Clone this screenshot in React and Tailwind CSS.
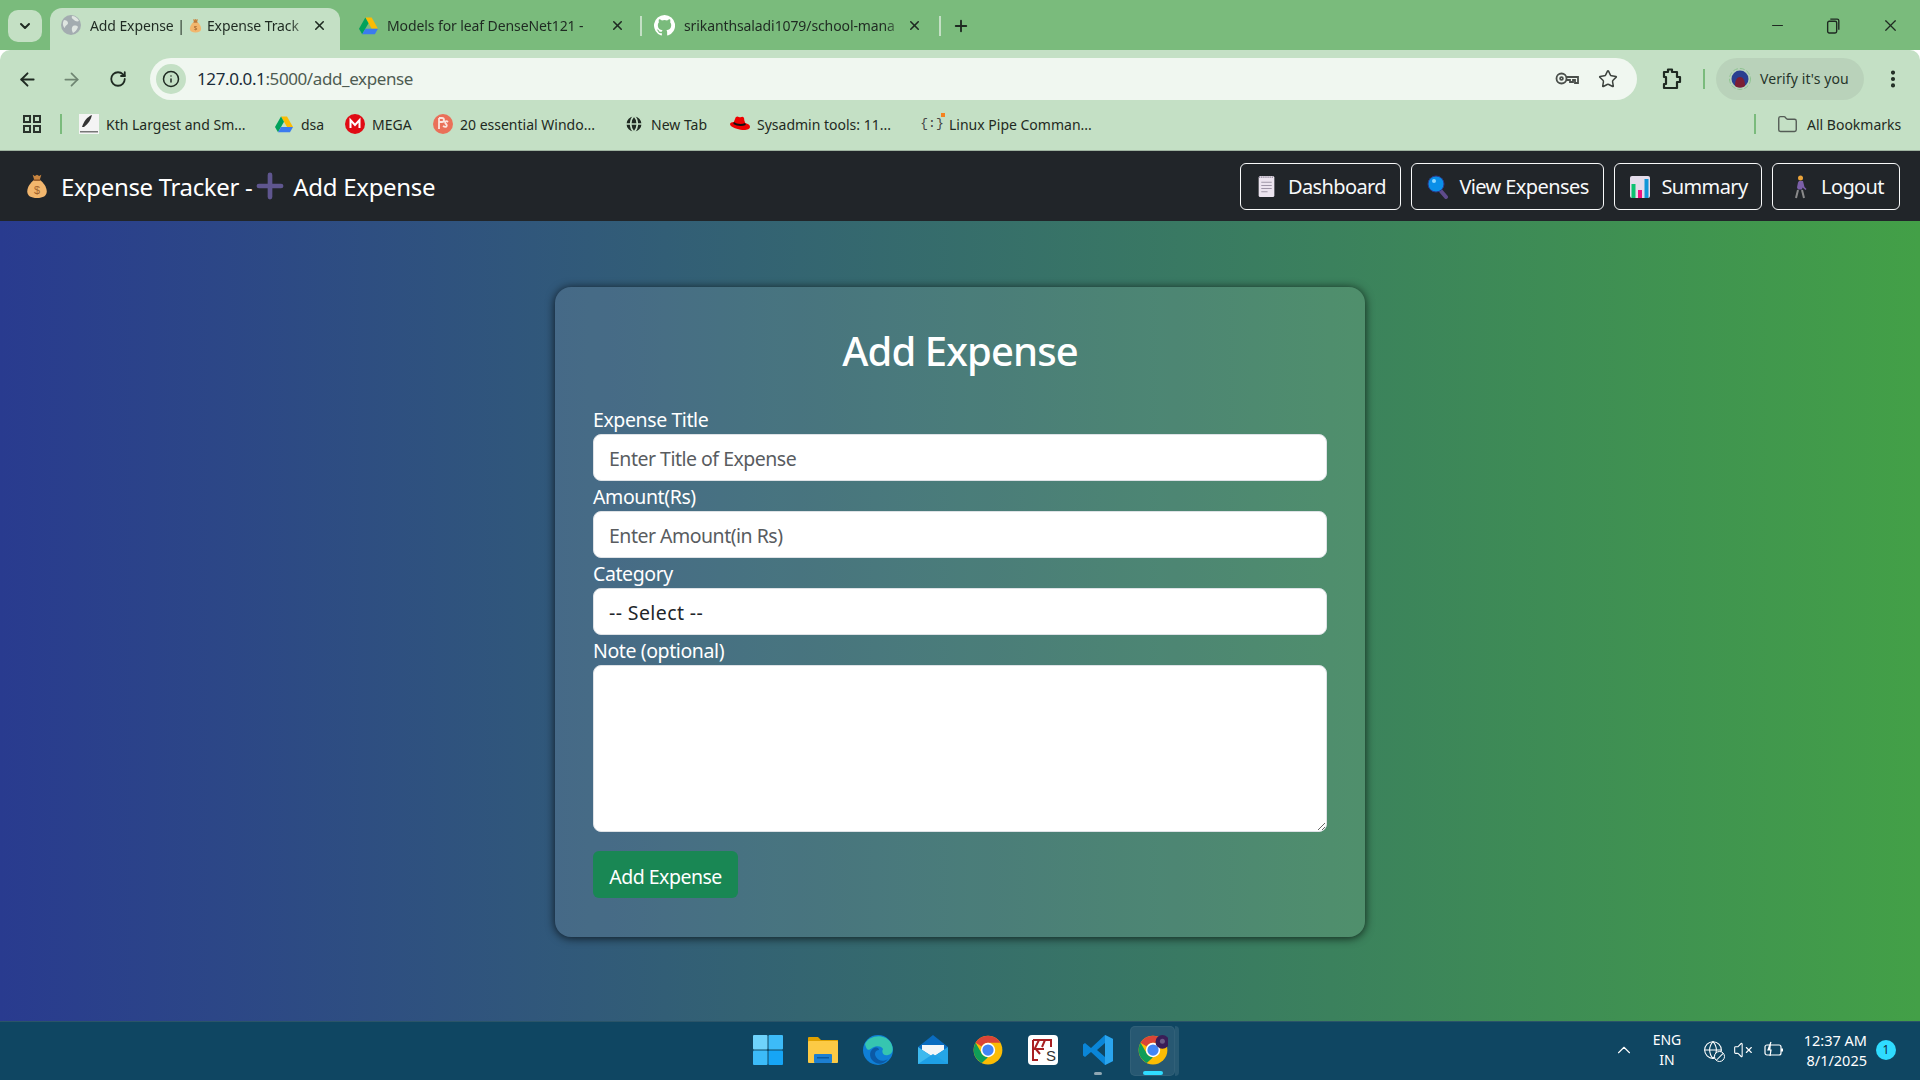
import { ArrowLeft, ArrowRight, RotateCw, Info, Star, EllipsisVertical, X, Plus, Minus, ChevronDown, ChevronUp, Folder, Globe, VolumeX } from 'lucide-react';

const UI = "font-['Noto_Sans','Open_Sans',sans-serif]";

function DriveIcon({ size = 18 }) {
  return (
    <svg width={size} height={size} viewBox="0 0 24 22">
      <path d="M8 1h8l8 14h-8z" fill="#fbbc04" />
      <path d="M8 1 0 15l4 7 8-14z" fill="#00a25b" />
      <path d="M8 15h16l-4 7H4z" fill="#3b7bef" />
    </svg>
  );
}

function ChromeIcon({ size = 30, badge = false }) {
  return (
    <svg width={size} height={size} viewBox="0 0 48 48">
      <circle cx="24" cy="24" r="23" fill="#fbbc04" />
      <path d="M24 1a23 23 0 0 1 19.900 11.500H24a11.500 11.500 0 0 0-10 5.750L4.100 12.500A23 23 0 0 1 24 1z" fill="#db4437" />
      <path d="M4.100 12.500 14 29.750A11.500 11.500 0 0 0 24 35.500L14.100 44.700A23 23 0 0 1 4.100 12.500z" fill="#0f9d58" />
      <circle cx="24" cy="24" r="11.500" fill="#fff" />
      <circle cx="24" cy="24" r="9" fill="#4285f4" />
      {badge && <circle cx="39" cy="11" r="11" fill="#3a1d57" />}
      {badge && <circle cx="39" cy="10" r="4" fill="#6b5a85" />}
    </svg>
  );
}

function MoneyBag({ size = 26 }) {
  return (
    <svg width={size} height={size} viewBox="0 0 24 24">
      <path d="M8 1.500l2 1.200 2-1.200 2 1.200 2-1.200-1.500 5h-5z" fill="#c9853f" />
      <path d="M9.300 6.500h5.400C18 9 21 13 21 17c0 4-3.500 6-9 6s-9-2-9-6c0-4 3-8 6.300-10.500z" fill="#f2b66d" />
      <rect x="8.800" y="5.800" width="6.400" height="1.500" rx=".7" fill="#9c5f2a" />
      <text x="12" y="19.500" textAnchor="middle" fontSize="10" fontFamily="Liberation Sans" fill="#a1622c">$</text>
    </svg>
  );
}

function GitHubIcon() {
  return (
    <svg width={21} height={21} viewBox="0 0 16 16" fill="#fff">
      <path d="M8 0a8 8 0 0 0-2.530 15.590c.4.07.55-.17.55-.38v-1.340c-2.230.480-2.690-1.070-2.690-1.070-.370-.930-.890-1.180-.890-1.180-.730-.500.050-.490.050-.490.800.060 1.230.820 1.230.820.710 1.220 1.870.870 2.330.660.070-.520.280-.870.510-1.070-1.780-.200-3.640-.890-3.640-3.950 0-.870.310-1.590.820-2.150-.080-.200-.360-1.020.080-2.120 0 0 .670-.210 2.200.820a7.600 7.600 0 0 1 4 0c1.530-1.040 2.200-.820 2.200-.820.440 1.100.160 1.920.080 2.120.510.560.820 1.270.820 2.150 0 3.070-1.870 3.750-3.650 3.950.290.250.540.730.540 1.480v2.200c0 .210.150.460.550.380A8 8 0 0 0 8 0z" />
    </svg>
  );
}

function Tab({ icon, title, gap }) {
  return (
    <div className="flex items-center h-[34px]">
      {icon}
      <span className={`${gap} flex-1 whitespace-nowrap text-[14px] text-[#1f2a22] [mask-image:linear-gradient(to_right,#000_90%,transparent)] tracking-[-0.1px]`}>{title}</span>
      <X size={15} strokeWidth={2.500} className="text-[#1f2a22] shrink-0" />
    </div>
  );
}

function Bookmark({ icon, label, w }) {
  return (
    <div className={`flex items-center shrink-0 gap-[7px] ${w}`}>
      <span className="w-[20px] flex justify-center shrink-0">{icon}</span>
      <span className="text-[14px] text-[#1f2a22] whitespace-nowrap">{label}</span>
    </div>
  );
}

function NavButton({ icon, label, w }) {
  return (
    <a className={`flex items-center justify-center gap-[9px] h-[47px] mt-[1px] border border-[#f8f9fa] rounded-[6px] text-[20px] text-[#f8f9fa] tracking-[-0.6px] shrink-0 ${w}`}>
      <span className="w-[24px] flex justify-center">{icon}</span>
      <span className="pt-[1px]">{label}</span>
    </a>
  );
}

function Field({ label, children }) {
  return (
    <div>
      <label className="block h-[30px] leading-[32px] text-[19.500px] text-white tracking-[-0.4px]">{label}</label>
      {children}
    </div>
  );
}

const inputClass = 'block w-full h-[47px] px-[15px] pt-[2px] bg-white border border-[#dee2e6] rounded-[8px] text-[19.500px] tracking-[-0.5px] text-[#212529] placeholder:text-[#595c5f] outline-none';

export default function App() {
  return (
    <div className={`w-[1920px] h-[1080px] overflow-hidden flex flex-col ${UI}`}>
      {/* tab strip */}
      <div className="h-[50px] bg-[#7abb7c] flex items-end shrink-0">
        <div className="w-[34px] h-[32px] ml-[8px] mb-[8px] rounded-[10px] bg-[#c4e0c4] flex items-center justify-center">
          <ChevronDown size={16} strokeWidth={3} className="text-[#1f2a22]" />
        </div>
        <div className="ml-[8px] w-[290px] h-[42px] pl-[11px] pr-[13px] bg-[#c4e0c5] rounded-t-[12px]">
          <Tab gap="ml-[9px]" title={<>Add Expense | <span className="inline-block align-[-2px]"><MoneyBag size={15} /></span> Expense Track</>} icon={<svg width="20" height="20" viewBox="0 0 20 20" className="shrink-0"><circle cx="10" cy="10" r="10" fill="#a3acb0" /><path d="M3 5c2 0 4 1 4 3s-3 2-3 5c-2-1-3-5-1-8zM11 1c3 0 6 2 7 5-2 1-4 0-5-1s-3-2-2-4zM12 11c2-1 5 0 5 1-1 3-3 5-5 6-1-2-2-5 0-7z" fill="#dfe6e1" /></svg>} />
        </div>
        <div className="h-[42px] w-[269px] ml-[16px] pl-[3px]">
          <Tab gap="ml-[9px]" title="Models for leaf DenseNet121 -" icon={<DriveIcon size={19} />} />
        </div>
        <div className="w-[2px] h-[20px] mb-[14px] ml-[15px] bg-[#c4e0c5]" />
        <div className="h-[42px] w-[285px] ml-[12px] pr-[17px]">
          <Tab gap="ml-[9px]" title="srikanthsaladi1079/school-mana" icon={<GitHubIcon />} />
        </div>
        <div className="w-[2px] h-[20px] mb-[14px] bg-[#c4e0c5]" />
        <Plus size={18} strokeWidth={2.500} className="mb-[15px] ml-[11px] text-[#1f2a22]" />
        <div className="flex-1" />
        <div className="flex items-center h-[50px] text-[#1f2a22] mr-[20px] gap-[39px]">
          <Minus size={17} strokeWidth={1.500} />
          <svg width="17" height="17" viewBox="0 0 16 16" fill="none" stroke="currentColor" strokeWidth="1.300"><rect x="2.500" y="4" width="8.500" height="11" rx="1.500" /><path d="M5 2h6.500A1.500 1.500 0 0 1 13 3.500V12" /></svg>
          <X size={19} strokeWidth={1.500} />
        </div>
      </div>

      {/* address bar */}
      <div className="h-[58px] bg-[#c4e0c5] rounded-t-[10px] flex items-center shrink-0">
        <ArrowLeft size={21} strokeWidth={2.200} className="ml-[17px] text-[#1f2a22]" />
        <ArrowRight size={21} strokeWidth={2} className="ml-[23px] text-[#6f8572]" />
        <RotateCw size={18} strokeWidth={2.400} className="ml-[27px] text-[#1f2a22]" />
        <div className="ml-[23px] w-[1487px] h-[42px] bg-[#f0f7f0] rounded-full flex items-center">
          <div className="ml-[6px] w-[30px] h-[30px] rounded-full bg-[#c4e0c5] flex items-center justify-center">
            <Info size={18} strokeWidth={2} className="text-[#1f2a22]" />
          </div>
          <span className="ml-[11px] text-[17px] tracking-[-0.4px] text-[#1a2c3a]">127.0.0.1<span className="text-[#4e5c52]">:5000/add_expense</span></span>
          <div className="flex-1" />
          <svg width="24" height="16" viewBox="0 0 24 16" fill="none" stroke="#4a4f4b" strokeWidth="1.800"><circle cx="6.500" cy="7.500" r="5" /><circle cx="6.500" cy="7.500" r="1.400" /><path d="M11.500 6H23v6h-3V9h-2v2h-3V9h-3.500" /></svg>
          <Star size={20} strokeWidth={1.800} className="ml-[19px] mr-[19px] text-[#3d433e]" />
        </div>
        <svg width="24" height="24" viewBox="0 0 24 24" fill="none" stroke="#1f2a22" strokeWidth="2.200" className="ml-[22px]"><path d="M5 5h4V2.500h4V5h5v5h3v5h-3v6H5v-4h2v-7H5z" strokeLinejoin="round" /></svg>
        <div className="ml-[20px] w-[2px] h-[20px] bg-[#7abb7c]" />
        <div className="ml-[11px] w-[148px] h-[42px] rounded-full bg-[#b9d2ba] flex items-center pl-[13px]">
          <svg width="22" height="26" viewBox="0 0 22 26"><circle cx="11" cy="13" r="10.500" fill="none" stroke="#8fc391" strokeWidth="1" strokeDasharray="5 2" /><circle cx="11" cy="13" r="8.500" fill="#2a3f90" /><path d="M6 20c0-6 2-9 5-9s5 3 5 9c-3 2-7 2-10 0z" fill="#7c1f33" /></svg>
          <span className="ml-[9px] -mt-[2px] text-[14px] tracking-[0.1px] text-[#26352a] whitespace-nowrap">Verify it's you</span>
        </div>
        <EllipsisVertical size={22} strokeWidth={2.500} className="ml-[18px] text-[#1f2a22]" />
      </div>

      {/* bookmarks bar */}
      <div className="h-[43px] bg-[#c4e0c5] flex items-center shrink-0 border-b border-[#9eb29f] pb-[10px]">
        <svg width="20" height="20" viewBox="0 0 20 20" fill="none" stroke="#2a332c" strokeWidth="2" className="ml-[22px]"><rect x="2" y="2" width="6" height="6" /><rect x="12" y="2" width="6" height="6" /><rect x="2" y="12" width="6" height="6" /><rect x="12" y="12" width="6" height="6" /></svg>
        <div className="ml-[18px] mr-[17px] w-[2px] h-[20px] bg-[#7abb7c]" />
        <Bookmark w="w-[195px]" label="Kth Largest and Sm..." icon={<svg width="20" height="20" viewBox="0 0 20 20"><rect width="20" height="20" fill="#f4f4f4" /><path d="M3 13C5 7 8 3 13 1c-1 5-4 9-8 12z" fill="#333" /><rect x="1" y="17" width="18" height="1.500" fill="#777" /></svg>} />
        <Bookmark w="w-[71px]" label="dsa" icon={<DriveIcon size={18} />} />
        <Bookmark w="w-[88px]" label="MEGA" icon={<svg width="20" height="20" viewBox="0 0 20 20"><circle cx="10" cy="10" r="10" fill="#e00b14" /><path d="M5.500 14V6l4.500 5 4.500-5v8" stroke="#fff" strokeWidth="2" fill="none" /></svg>} />
        <Bookmark w="w-[191px]" label="20 essential Windo..." icon={<svg width="20" height="20" viewBox="0 0 20 20"><circle cx="10" cy="10" r="10" fill="#ea7059" /><path d="M6 15V4M6 4h3a2 2 0 0 1 0 4H6M15 8c-2-2-4 0-2 2s0 4-3 2" stroke="#fbe4de" strokeWidth="1.800" fill="none" /></svg>} />
        <Bookmark w="w-[106px]" label="New Tab" icon={<Globe size={20} fill="#1f2a22" className="text-[#c4e0c5]" />} />
        <Bookmark w="w-[192px]" label="Sysadmin tools: 11..." icon={<svg width="21" height="18" viewBox="0 0 21 18"><path d="M6 2c2-2 3 0 5 0 2-1 4-1 4 3l1 3c3 1 5 2 5 4 0 3-5 4-10 3C6 14 0 12 0 9c0-1 2-2 4-2z" fill="#e00" /><path d="M4 7c3 2 8 3 12 1l.6 2C12 12 7 11 3.500 9z" fill="#111" /></svg>} />
        <Bookmark w="w-[832px]" label="Linux Pipe Comman..." icon={<span className="text-[13px] font-['Liberation_Mono',monospace] text-[#444] whitespace-nowrap relative">{'{:}'}<span className="absolute -top-[1px] -right-[1px] w-[4px] h-[4px] bg-[#f58220]" /></span>} />
        <div className="w-[2px] h-[20px] bg-[#7abb7c]" />
        <Folder size={21} strokeWidth={1.600} className="ml-[21px] text-[#545c56]" />
        <span className="ml-[9px] text-[14px] text-[#1f2a22] whitespace-nowrap">All Bookmarks</span>
      </div>

      {/* app navbar */}
      <nav className="h-[70px] bg-[#212529] flex items-center pl-[24px] pr-[20px] shrink-0">
        <MoneyBag size={26} />
        <span className="ml-[11px] pt-[2px] text-[24px] text-white tracking-[-0.35px] whitespace-nowrap">Expense Tracker -</span>
        <svg width="28" height="28" viewBox="0 0 24 24" className="ml-[4px]" fill="#5f568f"><path d="M10 2.500a2 2 0 0 1 4 0V10h7.500a2 2 0 0 1 0 4H14v7.500a2 2 0 0 1-4 0V14H2.500a2 2 0 0 1 0-4H10z" /></svg>
        <span className="ml-[9px] pt-[2px] text-[24px] text-white tracking-[-0.3px] whitespace-nowrap">Add Expense</span>
        <div className="flex-1" />
        <div className="flex gap-[10px]">
          <NavButton w="w-[161px]" label="Dashboard" icon={<svg width="17" height="23" viewBox="0 0 16 22"><rect x="0.500" y="1" width="15" height="20" rx="1.500" fill="#ece4ef" /><path d="M3 7h10M3 10h10M3 13h10M3 16h6" stroke="#9f96a8" strokeWidth="1" /><path d="M1 2h14" stroke="#8d8496" strokeWidth="1.500" strokeDasharray="1 1" /></svg>} />
          <NavButton w="w-[193px]" label="View Expenses" icon={<svg width="22" height="24" viewBox="0 0 22 24"><path d="M13 15l6 7" stroke="#5f4b8b" strokeWidth="4" strokeLinecap="round" /><circle cx="9" cy="9" r="8" fill="#0a8fe8" stroke="#2b3a8c" strokeWidth="1" /><circle cx="7" cy="6" r="2" fill="#8fd8ff" /></svg>} />
          <NavButton w="w-[148px]" label="Summary" icon={<svg width="20" height="22" viewBox="0 0 20 22"><rect width="20" height="22" rx="2" fill="#e4dcea" /><rect x="1.500" y="8" width="4" height="14" fill="#0dc271" /><rect x="8" y="14" width="4" height="8" fill="#f0127e" /><rect x="14.500" y="3" width="4" height="19" fill="#1196d8" /></svg>} />
          <NavButton w="w-[128px]" label="Logout" icon={<svg width="16" height="24" viewBox="0 0 16 24"><circle cx="8.500" cy="3" r="2.500" fill="#eaa33a" /><path d="M7 6h4l1.500 6 2 2-1 1-3-2.500-.5 2H6l-1-2 1-5z" fill="#7b5fa8" /><path d="M6 15l-2 8M10 15l2 8" stroke="#8a8a8a" strokeWidth="2" /></svg>} />
        </div>
      </nav>

      {/* page */}
      <main className="h-[800px] shrink-0 bg-[linear-gradient(to_right,#293b8f,#43a047)] flex justify-center pt-[66px]">
        <div className="w-[810px] h-[650px] px-[38px] pt-[37px] rounded-[16px] bg-white/10 shadow-[0_1px_10px_rgba(0,0,0,0.75)]">
          <h2 className="h-[53px] text-center text-[40px] leading-[53px] font-medium tracking-[-0.9px] text-white">Add Expense</h2>
          <form className="mt-[27px] flex flex-col">
            <Field label="Expense Title">
              <input className={inputClass} placeholder="Enter Title of Expense" />
            </Field>
            <Field label="Amount(Rs)">
              <input className={inputClass} placeholder="Enter Amount(in Rs)" />
            </Field>
            <Field label="Category">
              <div className={`${inputClass} flex items-center tracking-[0.4px]`}>-- Select --</div>
            </Field>
            <Field label="Note (optional)">
              <textarea className={`${inputClass} h-[167px]`} />
            </Field>
            <button type="button" className="mt-[19px] w-[145px] h-[47px] pt-[4px] rounded-[6px] bg-[#198754] text-[19.500px] tracking-[-0.5px] text-white">Add Expense</button>
          </form>
        </div>
      </main>

      {/* taskbar */}
      <footer className="flex-1 bg-[#0f4662] border-t border-[#2a5468] flex items-center pb-[2px]">
        <div className="flex-1" />
        <div className="flex items-center gap-[25px]">
          <svg width="30" height="30" viewBox="0 0 30 30"><rect x="0" y="0" width="14.500" height="14.500" rx="1" fill="#6fd3fb" /><rect x="15.500" y="0" width="14.500" height="14.500" rx="1" fill="#3dbbf8" /><rect x="0" y="15.500" width="14.500" height="14.500" rx="1" fill="#3cbbf8" /><rect x="15.500" y="15.500" width="14.500" height="14.500" rx="1" fill="#16a5f5" /></svg>
          <svg width="30" height="30" viewBox="0 0 30 30"><path d="M0 3a1 1 0 0 1 1-1h9l3 3h17v2H0z" fill="#e0a100" /><rect x="0" y="6" width="30" height="22" rx="1" fill="#fcca45" /><rect x="6" y="19" width="18" height="9" rx="1" fill="#1d7fd1" /><rect x="9" y="22" width="12" height="1.500" fill="#0b5a9e" /></svg>
          <svg width="30" height="30" viewBox="0 0 30 30"><circle cx="15" cy="15" r="15" fill="#0f7fd6" /><path d="M2 9C6 0 22-2 28 8c3 6 2 11-3 12-4 1-7-2-5-6-1-3-7-4-11-1-3 2-5 4-7-4z" fill="#36c5b0" /><path d="M13 28c-7-3-8-12-2-15 3-1 5 0 5 2-4 0-5 4-3 7 2 4 8 5 12 2-3 4-8 6-12 4z" fill="#0b5aa6" /></svg>
          <svg width="30" height="30" viewBox="0 0 30 30"><path d="M15 0 30 12v17H0V12z" fill="#0a6cc0" /><path d="M4 10h22v5l-11 7-11-7z" fill="#f3f6f8" /><path d="M0 12l15 10v7H0z" fill="#3db9ee" /><path d="M30 12 15 22 30 29z" fill="#25a5e6" /><path d="M0 29 15 19l15 10z" fill="#1ea0e6" /></svg>
          <ChromeIcon />
          <svg width="30" height="30" viewBox="0 0 30 30"><rect width="30" height="30" rx="4" fill="#fff" /><path d="M5 5h18v7M5 5v20h5M11 5l-4 8 5 6M17 5l-3 7M4 14h12" stroke="#a81f22" strokeWidth="2" fill="none" /><text x="23" y="26" textAnchor="middle" fontSize="15" fontFamily="Liberation Sans" fill="#333">S</text></svg>
          <div className="relative">
            <svg width="30" height="30" viewBox="0 0 30 30" className="block"><path d="M22 0l8 4v22l-8 4L8 17l-6 5-2-1.500V9.500L2 8l6 5zM22 8l-8 7 8 7z" fill="#0a86d8" /><path d="M22 0l8 4v22l-8 4z" fill="#2aa5ee" /></svg>
            <div className="absolute left-[11px] top-[37px] w-[8px] h-[3px] rounded-full bg-[#8fa7b3]" />
          </div>
          <div className="relative w-[30px] h-[30px]">
            <div className="absolute -left-[8px] -top-[9px] w-[45px] h-[50px] rounded-[5px] bg-white/10 border border-white/5" />
            <div className="absolute left-[37px] -top-[9px] w-[4px] h-[50px] rounded-r-[5px] bg-white/10" />
            <div className="relative"><ChromeIcon badge /></div>
            <div className="absolute left-[5px] top-[36px] w-[20px] h-[4px] rounded-full bg-[#2fdcff]" />
          </div>
        </div>
        <div className="flex-1 flex items-center justify-end text-white">
          <ChevronUp size={22} strokeWidth={1.200} />
          <div className="ml-[16px] w-[32px] text-center text-[14px] leading-[20px]">ENG<br />IN</div>
          <div className="relative ml-[20px]">
            <Globe size={20} strokeWidth={1.300} />
            <span className="absolute right-[-2px] bottom-[-2px] w-[11px] h-[11px] rounded-full border border-white bg-[#0f4662] overflow-hidden"><span className="block w-[12px] h-px bg-white rotate-[-45deg] mt-[4px] -ml-[1px]" /></span>
          </div>
          <VolumeX size={20} strokeWidth={1.300} className="ml-[10px]" />
          <svg width="22" height="18" viewBox="0 0 22 18" fill="none" stroke="#fff" strokeWidth="1.200" className="ml-[10px]"><rect x="2" y="4" width="16" height="10" rx="2" /><path d="M19 7.500v3" strokeWidth="2" /><path d="M8 1 5 9h3l-1 6" fill="#fff" /></svg>
          <div className="ml-[16px] w-[66px] text-right text-[14.500px] leading-[20px] whitespace-nowrap">12:37 AM<br />8/1/2025</div>
          <div className="ml-[9px] mr-[24px] w-[20px] h-[20px] rounded-full bg-[#2fdcff] text-[#0f2b3a] text-[12px] flex items-center justify-center">1</div>
        </div>
      </footer>
    </div>
  );
}
